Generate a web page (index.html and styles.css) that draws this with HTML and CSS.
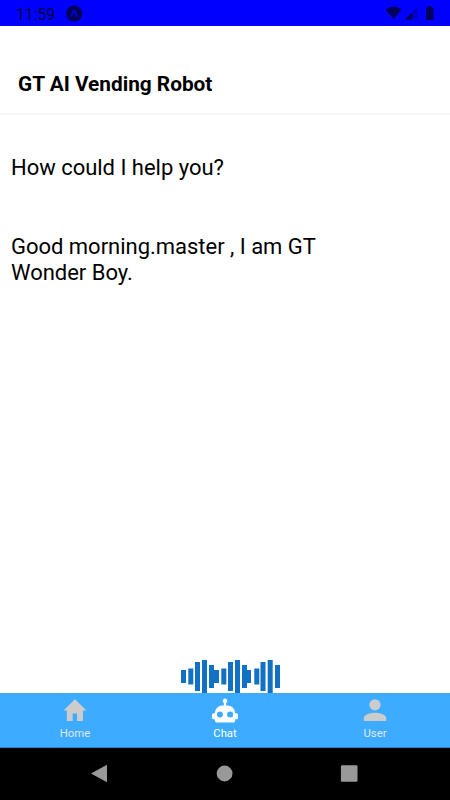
FILE: index.html
```html
<!DOCTYPE html>
<html lang="en">
<head>
<meta charset="utf-8">
<title>GT AI Vending Robot</title>
<link rel="stylesheet" href="styles.css">
</head>
<body>
<div class="status">
  <span class="clock">11:59</span>
  <svg class="expo" width="17" height="17" viewBox="0 0 17 17"><circle cx="8.200" cy="8.500" r="8.100" fill="#00005c"/><path d="M5.200 11.500 7.800 5.800h.8L11.200 11.500" fill="none" stroke="#0000f0" stroke-width="1.500"/></svg>
  <svg class="signals" width="50" height="16" viewBox="0 0 50 16"><path d="M-.5 3.500Q7.500-2.500 15.500 3.500L7.500 13.300Z" fill="#00005c"/><path d="M19 13.500 31.500 1v12.500Z" fill="#0000c4"/><path d="M19 13.500 26 6.500v7Z" fill="#00005c"/><path d="M40 1.500H42V0h3.500v1.500H47.500v12.500h-7.500Z" fill="#00005c"/></svg>
</div>
<header class="header"><h1>GT AI Vending Robot</h1></header>
<main class="chat">
  <p>How could I help you?</p>
  <p>Good morning.master , I am GT Wonder Boy.</p>
  <svg class="wave" width="100" height="33" viewBox="181 660 100 33" fill="#1271c4">
    <path d="M181 670h5v13h-5zM188.300 668.500h5v16h-5zM195 662h5v29h-5zM202 660h5v33h-5zM209 665h5v23h-5zM214 670h5v13h-5zM221.300 668.500h5v16h-5zM228 662h5v29h-5zM235 660h5v33h-5zM242 665h5v23h-5zM247 670h4v13h-4zM254.300 668.500h5v16h-5zM260.500 662h5v29h-5zM267.700 660h5v33h-5zM275 665h5v23h-5z"/>
  </svg>
</main>
<nav class="tabs">
  <a class="tab"><svg width="30" height="26" viewBox="0 0 30 26"><path d="M15 1.300 26.500 12.500H23V23h-6v-7.500h-4.300V23H6.800V12.500H3.500Z" fill="#ccc"/></svg><span>Home</span></a>
  <a class="tab active"><svg width="30" height="26" viewBox="0 0 30 26"><path fill="#fff" fill-rule="evenodd" d="M15 .6a2.400 2.400 0 0 1 1.100 4.500V7.500H17.500A7.700 7.700 0 0 1 25.200 15.200H26.500Q28 15.200 28 16.700V20Q28 21.300 26.500 21.300H25.200V22Q25.200 24.600 22.600 24.600H7.400Q4.800 24.600 4.800 22V21.300H3.500Q2 21.300 2 20V16.700Q2 15.200 3.500 15.200H4.800A7.700 7.700 0 0 1 12.500 7.500H13.900V5.100A2.400 2.400 0 0 1 15 .6ZM9.900 13.600a3 3 0 1 0 0 6 3 3 0 0 0 0-6ZM20.100 13.600a3 3 0 1 0 0 6 3 3 0 0 0 0-6Z"/></svg><span>Chat</span></a>
  <a class="tab"><svg width="30" height="26" viewBox="0 0 30 26" fill="#ccc"><circle cx="15" cy="6.800" r="5.600"/><path d="M3.800 23V20C3.800 16.500 11 14.700 15 14.700S26.200 16.500 26.200 20V23Z"/></svg><span>User</span></a>
</nav>
<footer class="system">
  <svg width="18" height="20" viewBox="0 0 18 20"><path d="M1 9.500 17 .8V18.300Z" fill="#999"/></svg>
  <svg width="18" height="20" viewBox="0 0 18 20"><circle cx="9.600" cy="9.500" r="7.900" fill="#999"/></svg>
  <svg width="18" height="20" viewBox="0 0 18 20"><rect x=".9" y="1.200" width="16.600" height="16.600" rx="1.200" fill="#999"/></svg>
</footer>
</body>
</html>
```
FILE: styles.css
```css
* { box-sizing: border-box; }
body {
  margin: 0;
  height: 800px;
  display: flex;
  flex-direction: column;
  background: #fff;
  color: #000;
  font-family: Roboto, sans-serif;
  overflow: hidden;
}
.status {
  height: 26px;
  flex: none;
  display: flex;
  align-items: center;
  padding: 1px 14px 0 16px;
  background: #00f;
}
.clock { font-size: 15.7px; color: #000040; width: 50px; padding-top: 1px; }
.signals { margin-left: auto; }
.header {
  height: 89px;
  flex: none;
  padding: 46px 18px 0;
  border-bottom: 2px solid #f6f6f6;
}
h1 { margin: 0; font-size: 20.8px; line-height: 24px; font-weight: 700; }
.chat {
  flex: 1;
  display: flex;
  flex-direction: column;
  padding: 40px 11px 0;
}
.chat p {
  margin: 0 0 53px;
  width: 330px;
  font-size: 22px;
  letter-spacing: -.02px;
  line-height: 26px;
}
.wave { margin: auto 0 0 170px; flex: none; }
.tabs {
  height: 55px;
  flex: none;
  display: flex;
  background: #3dabff;
  border-bottom: 1px solid #2b80c4;
}
.tab {
  flex: 1;
  display: flex;
  flex-direction: column;
  align-items: center;
  padding-top: 5px;
  font-size: 11.3px;
  line-height: 14px;
  color: #e0e6eb;
}
.tab span { margin-top: 3px; }
.active { color: #fff; }
.system {
  height: 52px;
  flex: none;
  display: flex;
  align-items: center;
  justify-content: space-between;
  padding: 0 92px 0 90px;
  background: #000;
}
```
